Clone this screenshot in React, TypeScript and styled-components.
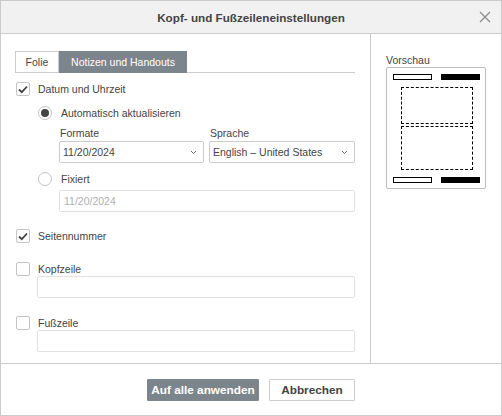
import React from "react";
import styled, { createGlobalStyle } from "styled-components";

const GlobalStyle = createGlobalStyle`
  html, body {
    margin: 0;
    padding: 0;
    background: #fff;
  }
  body {
    font-family: "Liberation Sans", Arial, sans-serif;
    font-size: 10.5px;
    color: #444;
  }
`;

const Dialog = styled.div`
  width: 502px;
  height: 416px;
  box-sizing: border-box;
  border: 1px solid #cbcbcb;
  display: flex;
  flex-direction: column;
  background: #fff;
`;

const Header = styled.div`
  height: 32px;
  flex: none;
  background: #f1f1f1;
  border-bottom: 1px solid #cbcbcb;
  display: flex;
  align-items: center;
  justify-content: center;
  position: relative;
  font-size: 11.7px;
  font-weight: bold;
  color: #444;
`;

const CloseButton = styled.div`
  position: absolute;
  right: 10px;
  top: 10px;
  width: 12px;
  height: 12px;
  display: flex;
`;

const Body = styled.div`
  flex: 1;
  display: flex;
  border-bottom: 1px solid #cbcbcb;
`;

const LeftPanel = styled.div`
  width: 355px;
  padding: 17px 0 0 14px;
  border-right: 1px solid #cbcbcb;
`;

const RightPanel = styled.div`
  flex: 1;
  padding: 19px 0 0 15px;
`;

const Tabs = styled.div`
  display: flex;
  height: 22px;
  width: 340px;
  border-bottom: 1px solid #cbcbcb;
  box-sizing: border-box;
`;

const Tab = styled.div<{ $active?: boolean; $width: number }>`
  height: 22px;
  width: ${(p) => p.$width}px;
  box-sizing: border-box;
  display: flex;
  align-items: center;
  justify-content: center;
  border: 1px solid ${(p) => (p.$active ? "#7d858c" : "#cbcbcb")};
  background: ${(p) => (p.$active ? "#7d858c" : "#fff")};
  color: ${(p) => (p.$active ? "#fff" : "#444")};
`;

const CheckRow = styled.div<{ $top: number }>`
  display: flex;
  align-items: center;
  height: 14px;
  margin-top: ${(p) => p.$top}px;
  margin-left: 1px;
  gap: 8px;
`;

const Box = styled.div`
  width: 14px;
  height: 14px;
  box-sizing: border-box;
  border: 1px solid #c4c4c4;
  border-radius: 2px;
  display: flex;
  align-items: center;
  justify-content: center;
`;

const RadioRow = styled.div<{ $top: number }>`
  display: flex;
  align-items: center;
  height: 14px;
  margin-top: ${(p) => p.$top}px;
  margin-left: 23px;
  gap: 9px;
`;

const Radio = styled.div<{ $checked?: boolean }>`
  width: 14px;
  height: 14px;
  box-sizing: border-box;
  border-radius: 50%;
  border: 1px solid #c4c4c4;
  display: flex;
  align-items: center;
  justify-content: center;
  &::after {
    content: "";
    display: ${(p) => (p.$checked ? "block" : "none")};
    width: 8px;
    height: 8px;
    border-radius: 50%;
    background: #444;
  }
`;

const Indented = styled.div<{ $left: number; $top: number }>`
  margin-left: ${(p) => p.$left}px;
  margin-top: ${(p) => p.$top}px;
`;

const FieldRow = styled.div`
  display: flex;
  gap: 5px;
`;

const Field = styled.div<{ $width: number }>`
  width: ${(p) => p.$width}px;
  display: flex;
  flex-direction: column;
`;

const Label = styled.div`
  height: 14px;
  line-height: 14px;
  margin-bottom: 1px;
  padding-left: 1px;
`;

const Select = styled.div`
  height: 22px;
  box-sizing: border-box;
  border: 1px solid #cbcbcb;
  border-radius: 2px;
  display: flex;
  align-items: center;
  justify-content: space-between;
  padding: 0 6px 0 3px;
`;

const Input = styled.div<{ $width: number; $disabled?: boolean }>`
  width: ${(p) => p.$width}px;
  height: 22px;
  box-sizing: border-box;
  border: 1px solid #e1e1e1;
  border-radius: 2px;
  display: flex;
  align-items: center;
  padding-left: 4px;
  color: ${(p) => (p.$disabled ? "#b0b0b0" : "#444")};
`;

const PreviewLabel = styled.div`
  height: 14px;
  line-height: 14px;
`;

const PreviewBox = styled.div`
  width: 100px;
  height: 122px;
  box-sizing: border-box;
  border: 1px solid #bdbdbd;
  border-radius: 2px;
  padding: 6px 5px 0 6px;
  display: flex;
  flex-direction: column;
`;

const BarRow = styled.div<{ $top: number }>`
  display: flex;
  justify-content: space-between;
  margin-top: ${(p) => p.$top}px;
`;

const Bar = styled.div<{ $filled?: boolean }>`
  width: 39px;
  height: 6px;
  box-sizing: border-box;
  border: 1px solid #000;
  background: ${(p) => (p.$filled ? "#000" : "#fff")};
`;

const DashedArea = styled.div<{ $height: number; $top: number }>`
  width: 72px;
  height: ${(p) => p.$height}px;
  box-sizing: border-box;
  border: 1px dashed #000;
  margin: ${(p) => p.$top}px 0 0 8px;
`;

const Footer = styled.div`
  flex: none;
  height: 50px;
  display: flex;
  align-items: center;
  justify-content: center;
  gap: 10px;
  padding-top: 1px;
`;

const Button = styled.button<{ $primary?: boolean }>`
  height: 22px;
  box-sizing: border-box;
  font-family: "Liberation Sans", Arial, sans-serif;
  font-size: 11.8px;
  font-weight: bold;
  padding: 0;
  width: ${(p) => (p.$primary ? "112px" : "86px")};
  border-radius: 1px;
  border: 1px solid ${(p) => (p.$primary ? "#7d858c" : "#cbcbcb")};
  background: ${(p) => (p.$primary ? "#7d858c" : "#fff")};
  color: ${(p) => (p.$primary ? "#fff" : "#444")};
`;

const Check = () => (
  <svg width="10" height="9" viewBox="0 0 10 9">
    <path d="M1 4.5 L3.8 7.2 L9 1.5" fill="none" stroke="#444" strokeWidth="1.8" />
  </svg>
);

const Chevron = () => (
  <svg width="7" height="5" viewBox="0 0 7 5">
    <path d="M1 1 L3.5 3.5 L6 1" fill="none" stroke="#666" strokeWidth="1" />
  </svg>
);

const Checkbox = ({ checked, label, top }: { checked?: boolean; label: string; top: number }) => (
  <CheckRow $top={top}>
    <Box>{checked && <Check />}</Box>
    <span>{label}</span>
  </CheckRow>
);

const App = () => {
  return (
    <>
      <GlobalStyle />
      <Dialog>
        <Header>
          Kopf- und Fußzeileneinstellungen
          <CloseButton>
            <svg width="12" height="12" viewBox="0 0 12 12">
              <path d="M1 1 L11 11 M11 1 L1 11" stroke="#8a8a8a" strokeWidth="1.2" />
            </svg>
          </CloseButton>
        </Header>
        <Body>
          <LeftPanel>
            <Tabs>
              <Tab $width={44}>Folie</Tab>
              <Tab $width={128} $active>
                Notizen und Handouts
              </Tab>
            </Tabs>
            <Checkbox checked label="Datum und Uhrzeit" top={9} />
            <RadioRow $top={10}>
              <Radio $checked />
              <span>Automatisch aktualisieren</span>
            </RadioRow>
            <Indented $left={44} $top={6}>
              <FieldRow>
                <Field $width={145}>
                  <Label>Formate</Label>
                  <Select>
                    <span>11/20/2024</span>
                    <Chevron />
                  </Select>
                </Field>
                <Field $width={146}>
                  <Label>Sprache</Label>
                  <Select>
                    <span>English – United States</span>
                    <Chevron />
                  </Select>
                </Field>
              </FieldRow>
            </Indented>
            <RadioRow $top={9}>
              <Radio />
              <span>Fixiert</span>
            </RadioRow>
            <Indented $left={44} $top={4}>
              <Input $width={296} $disabled>
                11/20/2024
              </Input>
            </Indented>
            <Checkbox checked label="Seitennummer" top={17} />
            <Checkbox label="Kopfzeile" top={19} />
            <Indented $left={22} $top={0}>
              <Input $width={318} />
            </Indented>
            <Checkbox label="Fußzeile" top={18} />
            <Indented $left={22} $top={0}>
              <Input $width={318} />
            </Indented>
          </LeftPanel>
          <RightPanel>
            <PreviewLabel>Vorschau</PreviewLabel>
            <PreviewBox>
              <BarRow $top={0}>
                <Bar />
                <Bar $filled />
              </BarRow>
              <DashedArea $height={37} $top={7} />
              <DashedArea $height={44} $top={2} />
              <BarRow $top={7}>
                <Bar />
                <Bar $filled />
              </BarRow>
            </PreviewBox>
          </RightPanel>
        </Body>
        <Footer>
          <Button $primary>Auf alle anwenden</Button>
          <Button>Abbrechen</Button>
        </Footer>
      </Dialog>
    </>
  );
};

export default App;
